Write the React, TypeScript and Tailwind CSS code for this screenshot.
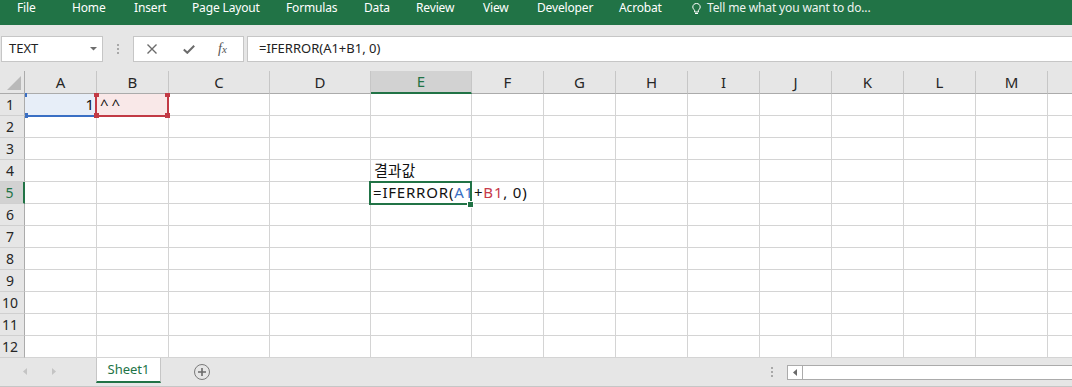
import React from 'react';

const COLS: { l: string; w: string; label: string }[] = [
  { l: 'A', w: 'w-[72px]', label: 'A' },
  { l: 'B', w: 'w-[72px]', label: 'B' },
  { l: 'C', w: 'w-[101px]', label: 'C' },
  { l: 'D', w: 'w-[101px]', label: 'D' },
  { l: 'E', w: 'w-[101px]', label: 'E' },
  { l: 'F', w: 'w-[72px]', label: 'F' },
  { l: 'G', w: 'w-[72px]', label: 'G' },
  { l: 'H', w: 'w-[72px]', label: 'H' },
  { l: 'I', w: 'w-[72px]', label: 'I' },
  { l: 'J', w: 'w-[72px]', label: 'J' },
  { l: 'K', w: 'w-[72px]', label: 'K' },
  { l: 'L', w: 'w-[72px]', label: 'L' },
  { l: 'M', w: 'w-[72px]', label: 'M' },
  { l: 'N', w: 'w-[72px]', label: '' },
];

const TABS: { t: string; w: string }[] = [
  { t: 'File', w: 'w-[55px]' },
  { t: 'Home', w: 'w-[62px]' },
  { t: 'Insert', w: 'w-[58px]' },
  { t: 'Page Layout', w: 'w-[94px]' },
  { t: 'Formulas', w: 'w-[78px]' },
  { t: 'Data', w: 'w-[52px]' },
  { t: 'Review', w: 'w-[67px]' },
  { t: 'View', w: 'w-[54px]' },
  { t: 'Developer', w: 'w-[82px]' },
  { t: 'Acrobat', w: 'w-[73px]' },
];

function CellContent({ r, c }: { r: number; c: string }) {
  if (r === 1 && c === 'A') {
    return <div className="flex h-full w-full items-center justify-end pr-[2px]">1</div>;
  }
  if (r === 1 && c === 'B') {
    return <div className="flex h-full w-full items-center pl-[3px] tracking-[3px]">^^</div>;
  }
  if (r === 4 && c === 'E') {
    return <div className="flex h-full w-full items-center pl-[3px]">결과값</div>;
  }
  if (r === 5 && c === 'E') {
    return (
      <div className="relative z-10 flex h-full w-full items-center whitespace-nowrap pl-[2px] tracking-[0.8px]">
        <span>=IFERROR(</span>
        <span className="text-[#3a6fc4]">A1</span>
        <span>+</span>
        <span className="text-[#c73a4a]">B1</span>
        <span>, 0)</span>
      </div>
    );
  }
  return null;
}

export default function App() {
  const rows = Array.from({ length: 12 }, (_, i) => i + 1);
  return (
    <div className="relative h-[387px] w-[1072px] overflow-hidden bg-white font-['Noto_Sans','Noto_Sans_CJK_KR',sans-serif] text-[#111]">
      {/* Ribbon tabs */}
      <div className="flex h-[25px] items-start bg-[#217346] pl-[17px] text-[12px] leading-[15px] tracking-[-0.15px] text-white">
        {TABS.map((t) => (
          <div key={t.t} className={`${t.w} shrink-0 whitespace-nowrap`}>
            {t.t}
          </div>
        ))}
        <div className="w-[15px] shrink-0 pt-[3px]">
          <svg width="9" height="12" viewBox="0 0 9 12" fill="none" stroke="#ffffff" strokeWidth="1">
            <path d="M4.5 0.5 C2.3 0.5 0.8 2 0.8 4 C0.8 5.5 1.8 6.3 2.6 7.2 L2.6 9 L6.4 9 L6.4 7.2 C7.2 6.3 8.2 5.5 8.2 4 C8.2 2 6.7 0.5 4.5 0.5 Z" />
            <path d="M3 10.5 L6 10.5" />
          </svg>
        </div>
        <div className="whitespace-nowrap text-[#eef4f0]">Tell me what you want to do...</div>
      </div>

      {/* Formula bar */}
      <div className="flex h-[46px] items-start bg-[#e6e6e6] pt-[11px]">
        <div className="ml-[1px] flex h-[26px] w-[102px] shrink-0 items-center border border-[#c6c6c6] bg-white pl-[7px] text-[13px] text-[#222]">
          <span>TEXT</span>
          <svg className="ml-auto mr-[5px]" width="7" height="4" viewBox="0 0 7 4">
            <polygon points="0,0 7,0 3.5,3.5" fill="#6d6d6d" />
          </svg>
        </div>
        <div className="flex w-[30px] shrink-0 justify-center pt-[8px]">
          <div className="flex flex-col gap-[2px]">
            <div className="h-[2px] w-[2px] bg-[#a8a8a8]" />
            <div className="h-[2px] w-[2px] bg-[#a8a8a8]" />
            <div className="h-[2px] w-[2px] bg-[#a8a8a8]" />
          </div>
        </div>
        <div className="flex h-[26px] w-[111px] shrink-0 items-center border border-[#c6c6c6] bg-white">
          <svg className="ml-[13px]" width="10" height="10" viewBox="0 0 10 10" stroke="#6b6b6b" strokeWidth="1.4">
            <path d="M0.5 0.5 L9.5 9.5 M9.5 0.5 L0.5 9.5" />
          </svg>
          <svg className="ml-[26px]" width="12" height="9" viewBox="0 0 12 9" fill="none" stroke="#6b6b6b" strokeWidth="2">
            <path d="M0.8 4.5 L4.3 7.8 L11.2 0.8" />
          </svg>
          <span className="ml-[23px] font-['Liberation_Serif',serif] text-[14px] italic leading-none text-[#555]">
            f<span className="text-[11px]">x</span>
          </span>
        </div>
        <div className="ml-[3px] flex h-[26px] flex-1 items-center border border-r-0 border-[#c6c6c6] bg-white pl-[11px] text-[13px] text-[#222]">
          =IFERROR(A1+B1, 0)
        </div>
      </div>

      {/* Grid */}
      <div className="relative">
        {/* Header row */}
        <div className="flex h-[23px] bg-[#e6e6e6]">
          <div className="relative w-[25px] shrink-0 border-b border-r border-[#ababab]">
            <svg className="absolute left-[7px] top-[5px]" width="14" height="14" viewBox="0 0 14 14">
              <polygon points="14,0 14,14 0,14" fill="#b9b9b9" />
            </svg>
          </div>
          {COLS.map((c) => (
            <div
              key={c.l}
              className={`${c.w} flex shrink-0 items-center justify-center border-r border-r-[#c6c6c6] text-[15px] ${
                c.l === 'E'
                  ? 'border-b-2 border-b-[#217346] bg-[#d2d2d2] text-[#217346]'
                  : 'border-b border-b-[#ababab] text-[#262626]'
              }`}
            >
              {c.label}
            </div>
          ))}
        </div>

        {rows.map((r) => (
          <div key={r} className="flex h-[22px] text-[15px]">
            <div
              className={`flex w-[25px] shrink-0 items-center justify-center border-b border-b-[#d0d0d0] pr-[4px] text-[14px] ${
                r === 5
                  ? 'border-r-2 border-r-[#217346] bg-[#d2d2d2] text-[#217346]'
                  : 'border-r border-r-[#ababab] bg-[#e6e6e6] text-[#262626]'
              }`}
            >
              {r}
            </div>
            {COLS.map((c) => (
              <div
                key={c.l}
                className={`${c.w} h-full shrink-0 border-b border-r border-[#d4d4d4] ${
                  r === 1 && c.l === 'A' ? 'bg-[#e7eef8]' : r === 1 && c.l === 'B' ? 'bg-[#f9e8e8]' : ''
                }`}
              >
                <CellContent r={r} c={c.l} />
              </div>
            ))}
          </div>
        ))}

        {/* A1 range highlight (blue) */}
        <div className="absolute left-[25px] top-[44px] h-[2px] w-[70px] bg-[#3a6fc4]" />
        <div className="absolute left-[25px] top-[22px] h-[4px] w-[2px] bg-[#3a6fc4]" />
        <div className="absolute left-[25px] top-[42px] h-[5px] w-[3px] bg-[#3a6fc4]" />

        {/* B1 range highlight (red) */}
        <div className="absolute left-[95px] top-[22px] h-[24px] w-[2px] bg-[#c23a45]" />
        <div className="absolute left-[167px] top-[22px] h-[24px] w-[2px] bg-[#c23a45]" />
        <div className="absolute left-[95px] top-[44px] h-[2px] w-[74px] bg-[#c23a45]" />
        <div className="absolute left-[94px] top-[22px] h-[4px] w-[5px] bg-[#c23a45]" />
        <div className="absolute left-[165px] top-[22px] h-[4px] w-[5px] bg-[#c23a45]" />
        <div className="absolute left-[94px] top-[42px] h-[5px] w-[5px] bg-[#c23a45]" />
        <div className="absolute left-[165px] top-[42px] h-[5px] w-[5px] bg-[#c23a45]" />

        {/* E5 active cell */}
        <div className="pointer-events-none absolute left-[369px] top-[110px] h-[24px] w-[103px] border-2 border-[#217346]" />
        <div className="absolute left-[467px] top-[130px] h-[7px] w-[7px] border border-white bg-[#217346]" />
      </div>

      {/* Sheet tabs bar */}
      <div className="flex h-[29px] items-start border-b border-[#c6c6c6] bg-[#e6e6e6]">
        <div className="flex w-[96px] shrink-0 items-center pt-[10px]">
          <svg className="ml-[23px]" width="4" height="7" viewBox="0 0 4 7">
            <polygon points="4,0 4,7 0,3.5" fill="#c4c4c4" />
          </svg>
          <svg className="ml-[25px]" width="4" height="7" viewBox="0 0 4 7">
            <polygon points="0,0 0,7 4,3.5" fill="#c4c4c4" />
          </svg>
        </div>
        <div className="flex h-[25px] w-[65px] shrink-0 items-center justify-center border-x border-b-2 border-x-[#c6c6c6] border-b-[#217346] bg-white pt-[1px] text-[13px] text-[#217346]">
          Sheet1
        </div>
        <div className="ml-[33px] mt-[6px] flex h-[16px] w-[16px] shrink-0 items-center justify-center rounded-full border-[1.5px] border-[#7a7a7a]">
          <svg width="8" height="8" viewBox="0 0 8 8" stroke="#6a6a6a" strokeWidth="1.6">
            <path d="M4 0 L4 8 M0 4 L8 4" />
          </svg>
        </div>
        <div className="ml-auto flex w-[301px] shrink-0 items-start">
          <div className="mt-[9px] flex flex-col gap-[2px]">
            <div className="h-[2px] w-[2px] bg-[#a8a8a8]" />
            <div className="h-[2px] w-[2px] bg-[#a8a8a8]" />
            <div className="h-[2px] w-[2px] bg-[#a8a8a8]" />
          </div>
          <div className="ml-[14px] mt-[7px] flex h-[15px] flex-1 border border-r-0 border-[#ababab] bg-white">
            <div className="flex w-[15px] items-center justify-center border-r border-[#ababab]">
              <svg width="4" height="7" viewBox="0 0 4 7">
                <polygon points="4,0 4,7 0,3.5" fill="#6a6a6a" />
              </svg>
            </div>
          </div>
        </div>
      </div>
    </div>
  );
}
